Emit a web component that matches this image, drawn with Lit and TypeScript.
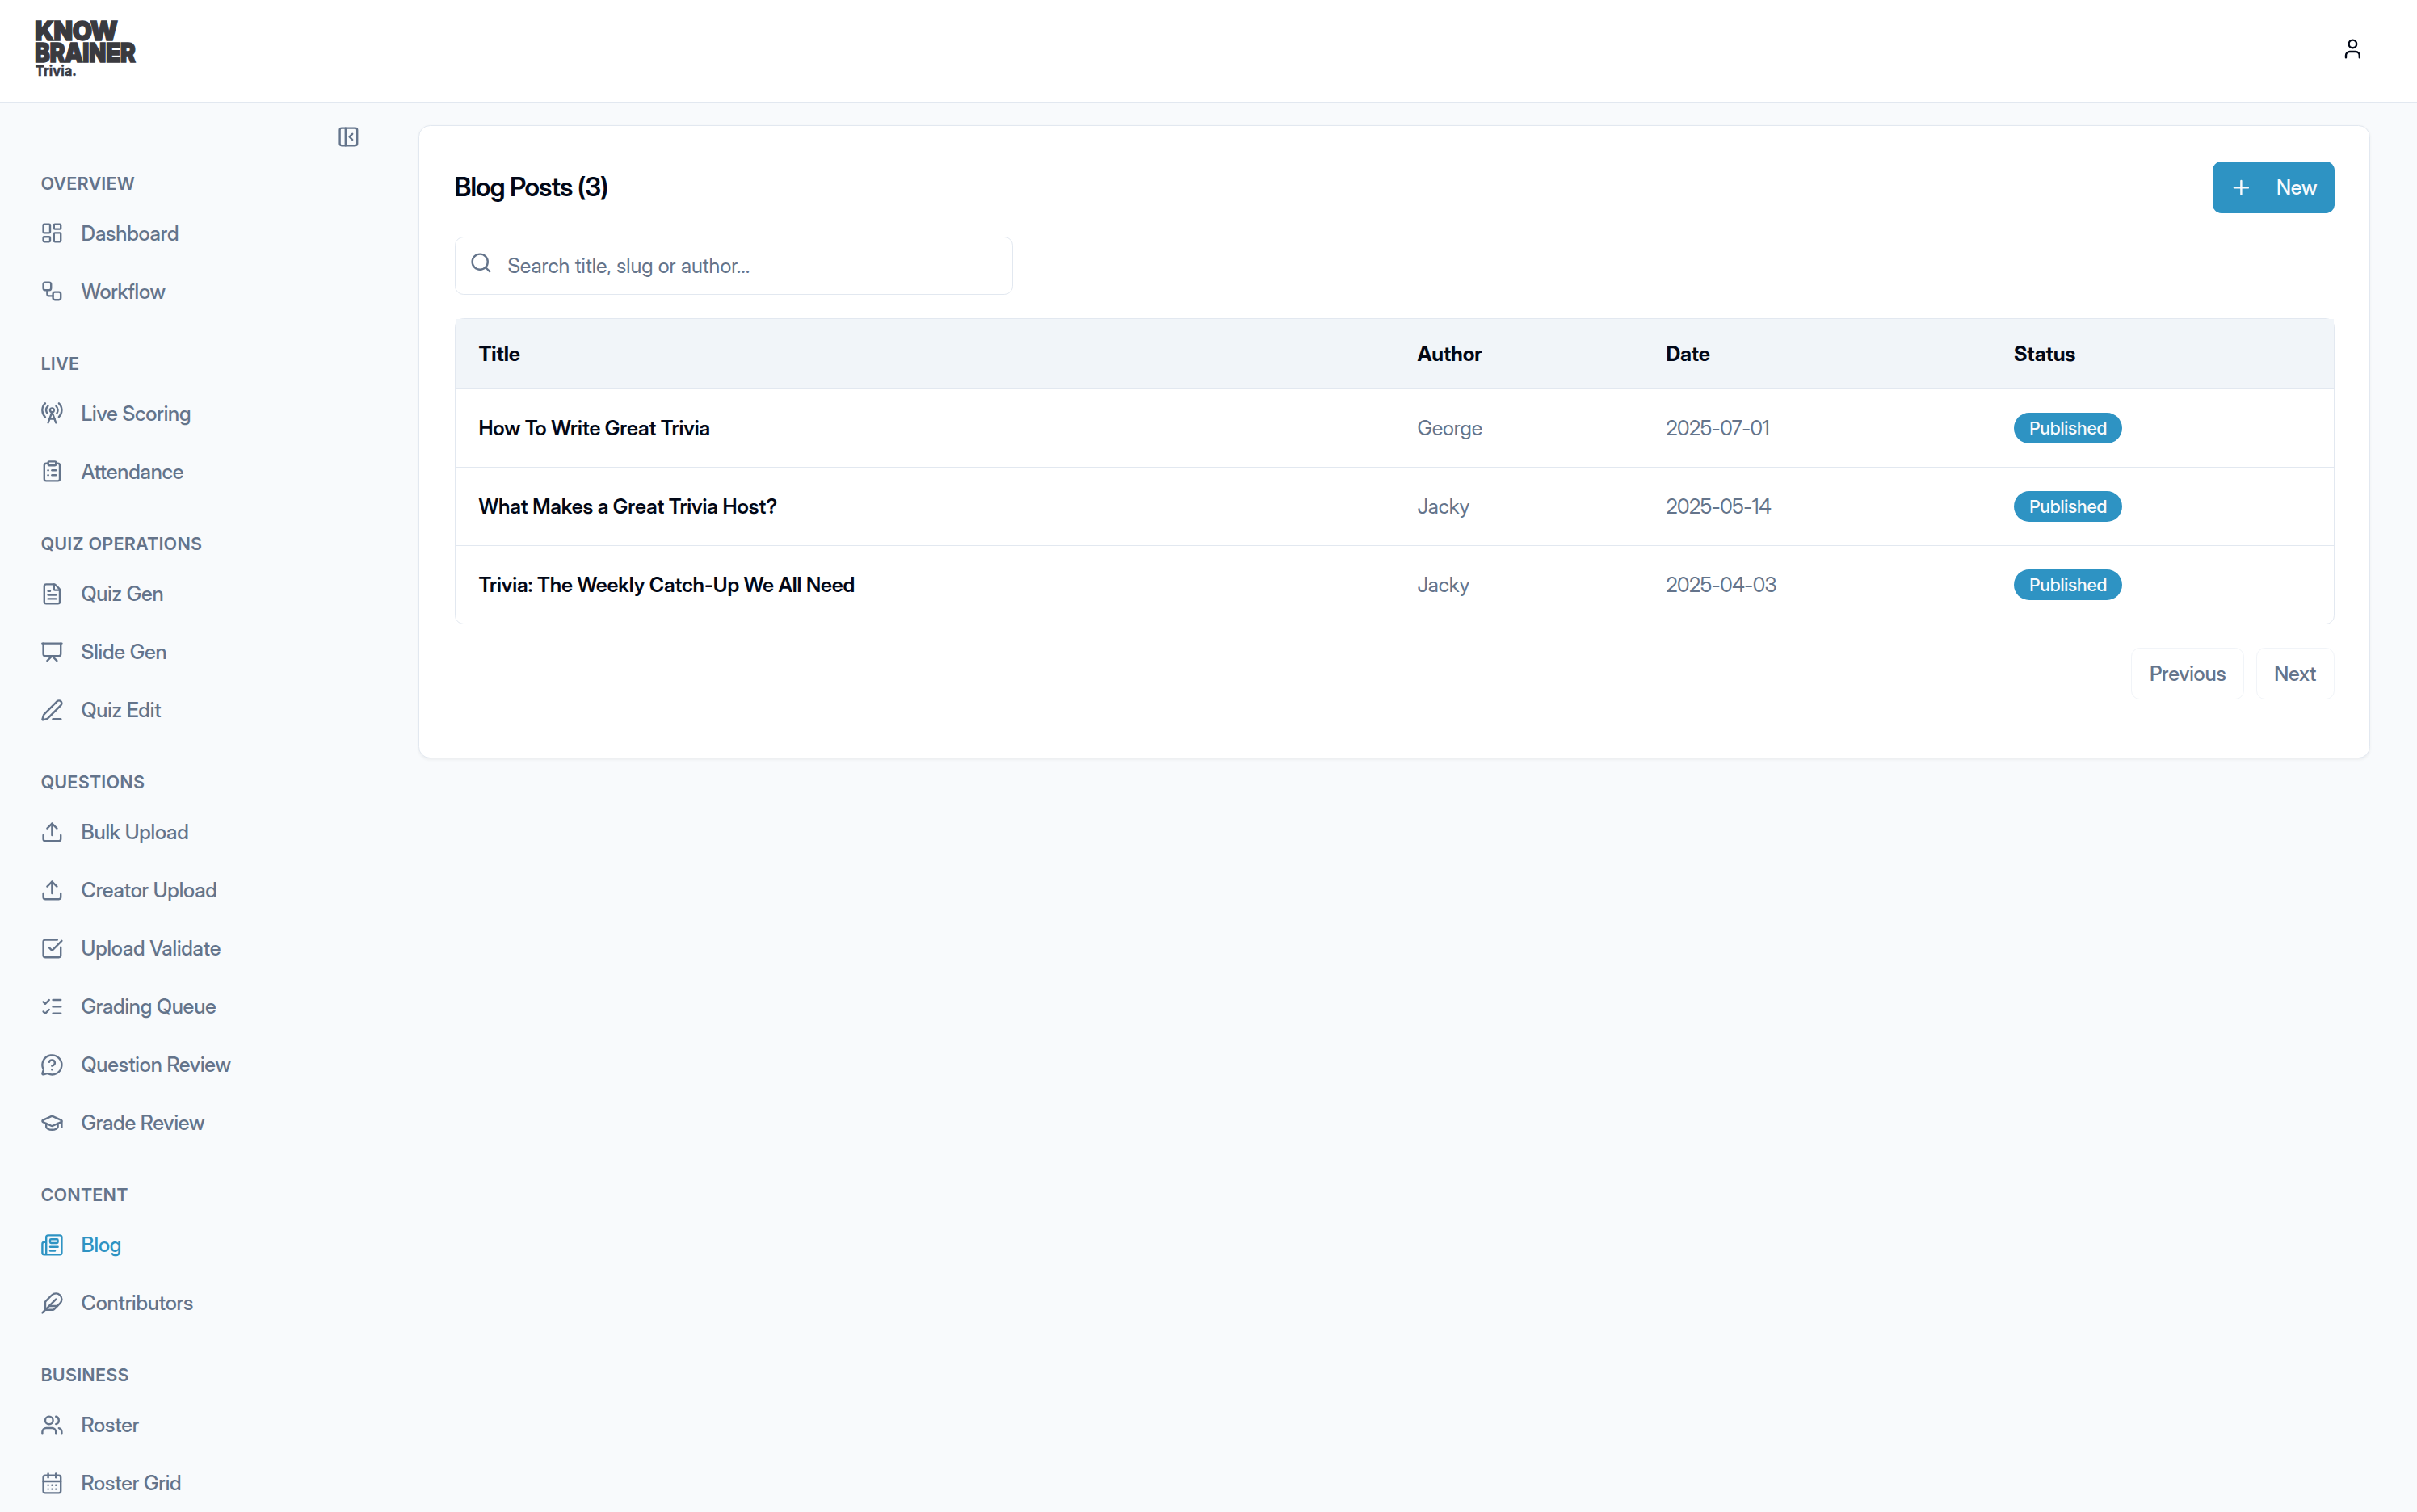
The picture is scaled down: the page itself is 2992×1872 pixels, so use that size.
import { LitElement, html, css, svg } from "lit";
import type { TemplateResult } from "lit";
import { customElement, property, state } from "lit/decorators.js";
import { classMap } from "lit/directives/class-map.js";

const icons: Record<string, TemplateResult> = {
  dashboard: svg`<rect width="7" height="9" x="3" y="3" rx="1"/><rect width="7" height="5" x="14" y="3" rx="1"/><rect width="7" height="9" x="14" y="12" rx="1"/><rect width="7" height="5" x="3" y="16" rx="1"/>`,
  workflow: svg`<rect width="8" height="8" x="3" y="3" rx="2"/><path d="M7 11v4a2 2 0 0 0 2 2h4"/><rect width="8" height="8" x="13" y="13" rx="2"/>`,
  tower: svg`<path d="M4.9 16.1C1 12.2 1 5.8 4.9 1.9"/><path d="M7.8 4.7a6.14 6.14 0 0 0-.8 7.5"/><circle cx="12" cy="9" r="2"/><path d="M16.2 4.8c2 2 2.26 5.11.8 7.47"/><path d="M19.1 1.9a9.96 9.96 0 0 1 0 14.1"/><path d="M9.5 18h5"/><path d="m8 22 4-11 4 11"/>`,
  clipboard: svg`<rect width="8" height="4" x="8" y="2" rx="1"/><path d="M16 4h2a2 2 0 0 1 2 2v14a2 2 0 0 1-2 2H6a2 2 0 0 1-2-2V6a2 2 0 0 1 2-2h2"/><path d="M12 11h4"/><path d="M12 16h4"/><path d="M8 11h.01"/><path d="M8 16h.01"/>`,
  file: svg`<path d="M6 22a2 2 0 0 1-2-2V4a2 2 0 0 1 2-2h8a2.4 2.4 0 0 1 1.704.706l3.588 3.588A2.4 2.4 0 0 1 20 8v12a2 2 0 0 1-2 2z"/><path d="M14 2v5a1 1 0 0 0 1 1h5"/><path d="M10 9H8"/><path d="M16 13H8"/><path d="M16 17H8"/>`,
  presentation: svg`<path d="M2 3h20"/><path d="M21 3v11a2 2 0 0 1-2 2H5a2 2 0 0 1-2-2V3"/><path d="m7 21 5-5 5 5"/>`,
  pen: svg`<path d="M13 21h8"/><path d="M21.174 6.812a1 1 0 0 0-3.986-3.987L3.842 16.174a2 2 0 0 0-.5.83l-1.321 4.352a.5.5 0 0 0 .623.622l4.353-1.32a2 2 0 0 0 .83-.497z"/>`,
  upload: svg`<path d="M12 3v12"/><path d="m17 8-5-5-5 5"/><path d="M21 15v4a2 2 0 0 1-2 2H5a2 2 0 0 1-2-2v-4"/>`,
  check: svg`<path d="M21 10.656V19a2 2 0 0 1-2 2H5a2 2 0 0 1-2-2V5a2 2 0 0 1 2-2h12.344"/><path d="m9 11 3 3L22 4"/>`,
  list: svg`<path d="M13 5h8"/><path d="M13 12h8"/><path d="M13 19h8"/><path d="m3 17 2 2 4-4"/><path d="m3 7 2 2 4-4"/>`,
  question: svg`<path d="M2.992 16.342a2 2 0 0 1 .094 1.167l-1.065 3.29a1 1 0 0 0 1.236 1.168l3.413-.998a2 2 0 0 1 1.099.092 10 10 0 1 0-4.777-4.719"/><path d="M9.09 9a3 3 0 0 1 5.83 1c0 2-3 3-3 3"/><path d="M12 17h.01"/>`,
  cap: svg`<path d="M21.42 10.922a1 1 0 0 0-.019-1.838L12.83 5.18a2 2 0 0 0-1.66 0L2.6 9.08a1 1 0 0 0 0 1.832l8.57 3.908a2 2 0 0 0 1.66 0z"/><path d="M22 10v6"/><path d="M6 12.5V16a6 3 0 0 0 12 0v-3.5"/>`,
  newspaper: svg`<path d="M15 18h-5"/><path d="M18 14h-8"/><path d="M4 22h16a2 2 0 0 0 2-2V4a2 2 0 0 0-2-2H8a2 2 0 0 0-2 2v16a2 2 0 0 1-4 0v-9a2 2 0 0 1 2-2h2"/><rect width="8" height="4" x="10" y="6" rx="1"/>`,
  feather: svg`<path d="M12.67 19a2 2 0 0 0 1.416-.588l6.154-6.172a6 6 0 0 0-8.49-8.49L5.586 9.914A2 2 0 0 0 5 11.328V18a1 1 0 0 0 1 1z"/><path d="M16 8 2 22"/><path d="M17.5 15H9"/>`,
  users: svg`<path d="M16 21v-2a4 4 0 0 0-4-4H6a4 4 0 0 0-4 4v2"/><path d="M16 3.128a4 4 0 0 1 0 7.744"/><path d="M22 21v-2a4 4 0 0 0-3-3.87"/><circle cx="9" cy="7" r="4"/>`,
  calendar: svg`<path d="M8 2v4"/><path d="M16 2v4"/><rect width="18" height="18" x="3" y="4" rx="2"/><path d="M3 10h18"/><path d="M8 14h.01"/><path d="M12 14h.01"/><path d="M16 14h.01"/><path d="M8 18h.01"/><path d="M12 18h.01"/><path d="M16 18h.01"/>`,
  panel: svg`<rect width="18" height="18" x="3" y="3" rx="2"/><path d="M9 3v18"/><path d="m16 15-3-3 3-3"/>`,
  user: svg`<path d="M19 21v-2a4 4 0 0 0-4-4H9a4 4 0 0 0-4 4v2"/><circle cx="12" cy="7" r="4"/>`,
  plus: svg`<path d="M5 12h14"/><path d="M12 5v14"/>`,
  search: svg`<path d="m21 21-4.34-4.34"/><circle cx="11" cy="11" r="8"/>`
};

const sections = [
  {
    title: "Overview",
    links: [
      { icon: "dashboard", label: "Dashboard" },
      { icon: "workflow", label: "Workflow" }
    ]
  },
  {
    title: "Live",
    links: [
      { icon: "tower", label: "Live Scoring" },
      { icon: "clipboard", label: "Attendance" }
    ]
  },
  {
    title: "Quiz Operations",
    links: [
      { icon: "file", label: "Quiz Gen" },
      { icon: "presentation", label: "Slide Gen" },
      { icon: "pen", label: "Quiz Edit" }
    ]
  },
  {
    title: "Questions",
    links: [
      { icon: "upload", label: "Bulk Upload" },
      { icon: "upload", label: "Creator Upload" },
      { icon: "check", label: "Upload Validate" },
      { icon: "list", label: "Grading Queue" },
      { icon: "question", label: "Question Review" },
      { icon: "cap", label: "Grade Review" }
    ]
  },
  {
    title: "Content",
    links: [
      { icon: "newspaper", label: "Blog" },
      { icon: "feather", label: "Contributors" }
    ]
  },
  {
    title: "Business",
    links: [
      { icon: "users", label: "Roster" },
      { icon: "calendar", label: "Roster Grid" }
    ]
  }
];

const posts = [
  { title: "How To Write Great Trivia", author: "George", date: "2025-07-01", status: "Published" },
  { title: "What Makes a Great Trivia Host?", author: "Jacky", date: "2025-05-14", status: "Published" },
  { title: "Trivia: The Weekly Catch-Up We All Need", author: "Jacky", date: "2025-04-03", status: "Published" }
];

@customElement("kb-icon")
export class IconElement extends LitElement {
  @property() name = "";

  static styles = css`
    :host {
      display: block;
      flex: 0 0 auto;
      width: 28.8px;
      height: 28.8px;
    }
    svg {
      display: block;
      width: 100%;
      height: 100%;
      fill: none;
      stroke: currentColor;
      stroke-width: 2;
      stroke-linecap: round;
      stroke-linejoin: round;
    }
  `;

  render() {
    return html`<svg viewBox="0 0 24 24" aria-hidden="true">${icons[this.name]}</svg>`;
  }
}

@customElement("kb-header")
export class HeaderElement extends LitElement {
  static styles = css`
    :host {
      display: flex;
      align-items: flex-start;
      justify-content: space-between;
      box-sizing: border-box;
      height: 127px;
      padding: 22px 65px 0 43px;
      background: #fff;
      border-bottom: 1px solid #e2e8f0;
    }
    .logo {
      display: block;
      width: 130px;
      height: 76px;
      overflow: visible;
      fill: #3a3a3f;
      stroke: #3a3a3f;
      font-family: "Inter Display", Inter, sans-serif;
      letter-spacing: 0;
    }
    .name {
      font-size: 32px;
      font-weight: 900;
      stroke-width: 1.3px;
    }
    .tag {
      font-family: Inter, sans-serif;
      font-size: 17.6px;
      font-weight: 700;
      stroke-width: 0.5px;
    }
    .account {
      margin-top: 24px;
      color: #020817;
    }
  `;

  render() {
    return html`
      <svg class="logo" viewBox="0 0 130 76" role="img" aria-label="Know Brainer Trivia">
        <text class="name" x="0.3" y="28.2" textLength="102" lengthAdjust="spacingAndGlyphs">KNOW</text>
        <text class="name" x="0.3" y="55.4" textLength="124.6" lengthAdjust="spacingAndGlyphs">BRAINER</text>
        <text class="tag" x="0.8" y="71.6" textLength="51" lengthAdjust="spacingAndGlyphs">Trivia.</text>
      </svg>
      <kb-icon class="account" name="user"></kb-icon>
    `;
  }
}

@customElement("kb-sidebar")
export class SidebarElement extends LitElement {
  @state() current = "Blog";

  static styles = css`
    :host {
      display: block;
      box-sizing: border-box;
      width: 461px;
      padding: 28px 14px 0 50.4px;
      overflow: hidden;
      border-right: 1px solid #e2e8f0;
      color: #64748b;
    }
    .toggle {
      display: flex;
      justify-content: flex-end;
      height: 57.6px;
    }
    .section {
      margin-bottom: 42.8px;
    }
    h2 {
      margin: 0 0 14.8px;
      font-family: Inter, sans-serif;
      font-size: 21.6px;
      line-height: 28.8px;
      font-weight: 600;
      letter-spacing: 0.2px;
      text-transform: uppercase;
    }
    nav {
      display: grid;
      gap: 7.2px;
    }
    a {
      display: flex;
      align-items: center;
      gap: 21.4px;
      height: 64.8px;
      font-weight: 500;
      letter-spacing: -0.16px;
      color: inherit;
      text-decoration: none;
      cursor: pointer;
    }
    a.active {
      color: #2e93c3;
    }
  `;

  render() {
    return html`
      <div class="toggle"><kb-icon name="panel"></kb-icon></div>
      ${sections.map(
        (section) => html`
          <div class="section">
            <h2>${section.title}</h2>
            <nav>
              ${section.links.map(
                (link) => html`
                  <a
                    class=${classMap({ active: link.label === this.current })}
                    @click=${() => (this.current = link.label)}
                  >
                    <kb-icon name=${link.icon}></kb-icon>
                    <span>${link.label}</span>
                  </a>
                `
              )}
            </nav>
          </div>
        `
      )}
    `;
  }
}

@customElement("kb-posts")
export class PostsElement extends LitElement {
  static styles = css`
    :host {
      display: block;
      box-sizing: border-box;
      height: 784px;
      padding: 44px 43.6px;
      background: #fff;
      border: 1px solid #e2e8f0;
      border-radius: 14.4px;
      box-shadow: 0 1.8px 3.6px rgba(0, 0, 0, 0.05);
      color: #020817;
    }
    .top {
      display: flex;
      align-items: center;
      justify-content: space-between;
      height: 64px;
      margin-bottom: 29px;
    }
    h1 {
      margin: 0;
      font-size: 32.4px;
      font-weight: 600;
      letter-spacing: -0.93px;
    }
    button {
      box-sizing: border-box;
      display: flex;
      align-items: center;
      height: 64px;
      padding: 0 21.6px;
      border: 0;
      border-radius: 10.8px;
      font: inherit;
      font-weight: 500;
      letter-spacing: -0.2px;
    }
    .new {
      gap: 28.8px;
      background: #2e93c3;
      color: #f8fafc;
    }
    .search {
      position: relative;
      box-sizing: border-box;
      width: 691px;
      height: 72px;
      margin-bottom: 29px;
    }
    .search kb-icon {
      position: absolute;
      left: 18px;
      top: 18px;
      color: #64748b;
    }
    input {
      box-sizing: border-box;
      width: 100%;
      height: 100%;
      padding: 0 21.6px 0 64.8px;
      background: #fff;
      border: 1px solid #e2e8f0;
      border-radius: 10.8px;
      font: inherit;
    }
    input::placeholder {
      color: #64748b;
      opacity: 1;
    }
    .frame {
      border: 1px solid #e2e8f0;
      border-radius: 10.8px;
    }
    table {
      width: 100%;
      table-layout: fixed;
      border-collapse: separate;
      border-spacing: 0;
    }
    .col-title {
      width: 1162px;
    }
    .col-author {
      width: 308px;
    }
    .col-date {
      width: 430.5px;
    }
    th,
    td {
      box-sizing: border-box;
      height: 97px;
      padding: 0 28.8px;
      text-align: left;
      font-weight: 400;
      letter-spacing: -0.1px;
      color: #64748b;
      border-bottom: 1px solid #e2e8f0;
    }
    th {
      height: 87px;
      background: #f1f5f9;
      font-weight: 700;
      color: #020817;
    }
    tr:last-child td {
      height: 96px;
      border-bottom: 0;
    }
    td.title {
      font-weight: 600;
      color: #020817;
    }
    td.date {
      letter-spacing: -0.45px;
    }
    .badge {
      display: block;
      width: max-content;
      padding: 4.6px 19px;
      border-radius: 19px;
      background: #2e93c3;
      color: #f8fafc;
      font-family: Inter, sans-serif;
      font-size: 21.6px;
      line-height: 28.8px;
      font-weight: 500;
      letter-spacing: -0.63px;
    }
    .pager {
      display: flex;
      justify-content: flex-end;
      gap: 14.4px;
      margin-top: 29px;
    }
    .pager button {
      background: #fff;
      border: 1px solid #f1f4f8;
      color: #64748b;
    }
  `;

  render() {
    return html`
      <div class="top">
        <h1>Blog Posts (${posts.length})</h1>
        <button class="new"><kb-icon name="plus"></kb-icon>New</button>
      </div>
      <div class="search">
        <input placeholder="Search title, slug or author..." />
        <kb-icon name="search"></kb-icon>
      </div>
      <div class="frame">
        <table>
          <colgroup>
            <col class="col-title" />
            <col class="col-author" />
            <col class="col-date" />
            <col />
          </colgroup>
          <thead>
            <tr>
              <th>Title</th>
              <th>Author</th>
              <th>Date</th>
              <th>Status</th>
            </tr>
          </thead>
          <tbody>
            ${posts.map(
              (post) => html`
                <tr>
                  <td class="title">${post.title}</td>
                  <td>${post.author}</td>
                  <td class="date">${post.date}</td>
                  <td><span class="badge">${post.status}</span></td>
                </tr>
              `
            )}
          </tbody>
        </table>
      </div>
      <div class="pager">
        <button disabled>Previous</button>
        <button disabled>Next</button>
      </div>
    `;
  }
}

@customElement("app-root")
export class AppRoot extends LitElement {
  static styles = css`
    :host {
      display: grid;
      grid-template-rows: auto minmax(0, 1fr);
      height: 100vh;
      overflow: hidden;
      background: #f8fafc;
      font-family: "Inter Display", Inter, sans-serif;
      font-size: 25.2px;
      line-height: 36px;
    }
    .body {
      display: grid;
      grid-template-columns: auto minmax(0, 1fr);
      min-height: 0;
    }
    main {
      padding: 28px 57.6px 0 57px;
    }
  `;

  render() {
    return html`
      <kb-header></kb-header>
      <div class="body">
        <kb-sidebar></kb-sidebar>
        <main><kb-posts></kb-posts></main>
      </div>
    `;
  }
}
